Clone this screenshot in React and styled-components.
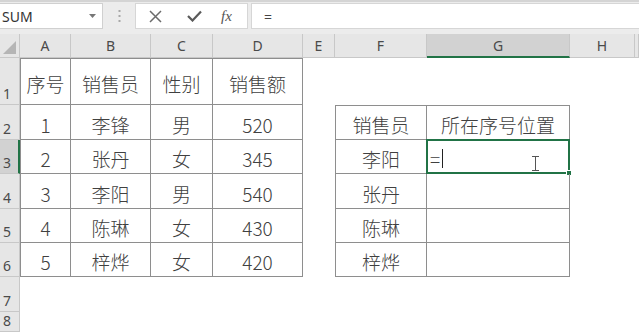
import React from "react";
import styled, { createGlobalStyle } from "styled-components";

const Global = createGlobalStyle`
  html, body { margin: 0; padding: 0; background: #ffffff; overflow: hidden; }
  #root { width: 639px; height: 332px; overflow: hidden; }
  * { box-sizing: border-box; }
`;

const Page = styled.div`
  width: 639px;
  height: 332px;
  display: flex;
  flex-direction: column;
  background: #fff;
`;

const FormulaBar = styled.div`
  height: 34px;
  flex: none;
  display: flex;
  align-items: flex-start;
  background: #ececec;
  border-top: 2px solid #d4d4d4;
  padding-top: 1px;
`;

const NameBox = styled.div`
  width: 103px;
  height: 26px;
  background: #fff;
  border: 1px solid #d0d0d0;
  border-left: none;
  display: flex;
  align-items: center;
  justify-content: space-between;
  padding: 0 6px 0 2px;
  font-family: "Noto Sans", "Open Sans", sans-serif;
  font-size: 14px;
  color: #333;
`;

const Dots = styled.div`
  width: 32px;
  height: 26px;
  display: flex;
  align-items: center;
  justify-content: center;
`;

const IconBox = styled.div`
  width: 113px;
  height: 26px;
  background: #fff;
  border: 1px solid #d6d6d6;
  display: grid;
  grid-template-columns: 38px 40px 1fr;
  align-items: center;
  justify-items: center;
`;

const Fx = styled.span`
  font-family: "Liberation Serif", "DejaVu Serif", serif;
  font-style: italic;
  font-size: 15px;
  color: #555;
  margin-right: 8px;
`;

const FormulaInput = styled.div`
  flex: 1;
  height: 26px;
  margin-left: 3px;
  background: #fff;
  border: 1px solid #d6d6d6;
  border-right: none;
  display: flex;
  align-items: center;
  padding-left: 12px;
  font-family: "Noto Sans", sans-serif;
  font-size: 14px;
  color: #444;
`;

const Sheet = styled.div`
  flex: 1;
  display: grid;
  grid-template-columns: 20px 51px 80px 62px 90px 32px 92px 143px 65px 1fr;
  grid-template-rows: 24px 47px 35px 34px 35px 34px 34px 35px 1fr;
  background: #fff;
`;

const Corner = styled.div`
  background: #e6e6e6;
  border-right: 1px solid #c8c8c8;
  border-bottom: 1px solid #c8c8c8;
  display: flex;
  align-items: flex-end;
  justify-content: flex-end;
  padding: 0 3px 3px 0;
`;

const ColHead = styled.div`
  background: ${(p) => (p.$active ? "#d2d2d2" : "#e6e6e6")};
  border-right: 1px solid #c8c8c8;
  border-bottom: ${(p) => (p.$active ? "2px solid #217346" : "1px solid #c8c8c8")};
  display: flex;
  align-items: flex-end;
  justify-content: center;
  padding-bottom: ${(p) => (p.$active ? "1px" : "2px")};
  font-family: "Noto Sans", "Open Sans", sans-serif;
  font-size: 14px;
  line-height: 18px;
  color: #4a4a4a;
`;

const RowHead = styled.div`
  background: ${(p) => (p.$active ? "#d2d2d2" : "#e6e6e6")};
  border-right: ${(p) => (p.$active ? "2px solid #217346" : "1px solid #c8c8c8")};
  border-bottom: 1px solid #c8c8c8;
  display: flex;
  align-items: flex-end;
  padding: 0 0 1px 3px;
  font-family: "Noto Sans", "Open Sans", sans-serif;
  font-size: 14px;
  line-height: 18px;
  color: #4a4a4a;
  overflow: hidden;
`;

const line = "1px solid #8e8e8e";

const Cell = styled.div`
  position: relative;
  display: flex;
  align-items: center;
  justify-content: ${(p) => (p.$left ? "flex-start" : "center")};
  padding: 4px 0 0 ${(p) => (p.$left ? "3px" : "0")};
  font-family: "Noto Sans CJK SC", "Noto Sans", sans-serif;
  font-weight: 300;
  font-size: 19px;
  line-height: 1;
  color: #404040;
  white-space: nowrap;
  border-right: ${(p) => (p.$box ? line : "none")};
  border-bottom: ${(p) => (p.$box ? line : "none")};
  border-left: ${(p) => (p.$first ? line : "none")};
  border-top: ${(p) => (p.$topRow ? line : "none")};
`;

const Selection = styled.div`
  position: absolute;
  left: -1px;
  top: -1px;
  right: -1px;
  bottom: -1px;
  border: 2px solid #217346;
  pointer-events: none;
`;

const FillHandle = styled.div`
  position: absolute;
  right: -4px;
  bottom: -4px;
  width: 6px;
  height: 6px;
  background: #217346;
  border: 1px solid #fff;
`;

const Caret = styled.span`
  display: inline-block;
  width: 1px;
  height: 19px;
  background: #222;
  margin-left: 2px;
`;

const Cursor = styled.svg`
  position: absolute;
  left: 105px;
  top: 16px;
`;

const cols = ["A", "B", "C", "D", "E", "F", "G", "H", ""];

const data = [
  ["序号", "销售员", "性别", "销售额", "", "", "", "", ""],
  ["1", "李锋", "男", "520", "", "销售员", "所在序号位置", "", ""],
  ["2", "张丹", "女", "345", "", "李阳", "", "", ""],
  ["3", "李阳", "男", "540", "", "张丹", "", "", ""],
  ["4", "陈琳", "女", "430", "", "陈琳", "", "", ""],
  ["5", "梓烨", "女", "420", "", "梓烨", "", "", ""],
  ["", "", "", "", "", "", "", "", ""],
  ["", "", "", "", "", "", "", "", ""],
];

function boxInfo(r, c) {
  if (r <= 5 && c <= 3) return { box: true, first: c === 0, topRow: r === 0 };
  if (r >= 1 && r <= 5 && (c === 5 || c === 6)) return { box: true, first: c === 5, topRow: r === 1 };
  return { box: false, first: false, topRow: false };
}

export default function App() {
  return (
    <Page>
      <Global />
      <FormulaBar>
        <NameBox>
          <span>SUM</span>
          <svg width="7" height="4" viewBox="0 0 7 4">
            <path d="M0 0 L7 0 L3.5 4 Z" fill="#777" />
          </svg>
        </NameBox>
        <Dots>
          <svg width="3" height="12" viewBox="0 0 3 12">
            <rect x="0.5" y="0" width="2" height="2" fill="#a8a8a8" />
            <rect x="0.5" y="5" width="2" height="2" fill="#a8a8a8" />
            <rect x="0.5" y="10" width="2" height="2" fill="#a8a8a8" />
          </svg>
        </Dots>
        <IconBox>
          <svg width="13" height="13" viewBox="0 0 13 13">
            <path d="M1 1 L12 12 M12 1 L1 12" stroke="#6b6b6b" strokeWidth="1.5" />
          </svg>
          <svg width="15" height="12" viewBox="0 0 15 12">
            <path d="M1 6 L5.5 10.5 L14 1.5" stroke="#5a5a5a" strokeWidth="2.2" fill="none" />
          </svg>
          <Fx>fx</Fx>
        </IconBox>
        <FormulaInput>=</FormulaInput>
      </FormulaBar>
      <Sheet>
        <Corner>
          <svg width="13" height="13" viewBox="0 0 13 13">
            <path d="M13 0 L13 13 L0 13 Z" fill="#b5b5b5" />
          </svg>
        </Corner>
        {cols.map((c, i) => (
          <ColHead key={"h" + i} $active={c === "G"}>
            {c}
          </ColHead>
        ))}
        {data.map((row, r) => (
          <React.Fragment key={"r" + r}>
            <RowHead $active={r === 2}>{r + 1}</RowHead>
            {row.map((v, c) => {
              const b = boxInfo(r, c);
              const selected = r === 2 && c === 6;
              return (
                <Cell
                  key={"c" + r + "-" + c}
                  $box={b.box}
                  $first={b.first}
                  $topRow={b.topRow}
                  $left={selected}
                >
                  {selected ? (
                    <>
                      <span>=</span>
                      <Caret />
                      <Selection>
                        <FillHandle />
                      </Selection>
                      <Cursor width="7" height="15" viewBox="0 0 7 15">
                        <path d="M0 0.5 H7 M3.5 0.5 V14.5 M0 14.5 H7" stroke="#555" strokeWidth="1" fill="none" />
                      </Cursor>
                    </>
                  ) : (
                    v
                  )}
                </Cell>
              );
            })}
          </React.Fragment>
        ))}
      </Sheet>
    </Page>
  );
}
